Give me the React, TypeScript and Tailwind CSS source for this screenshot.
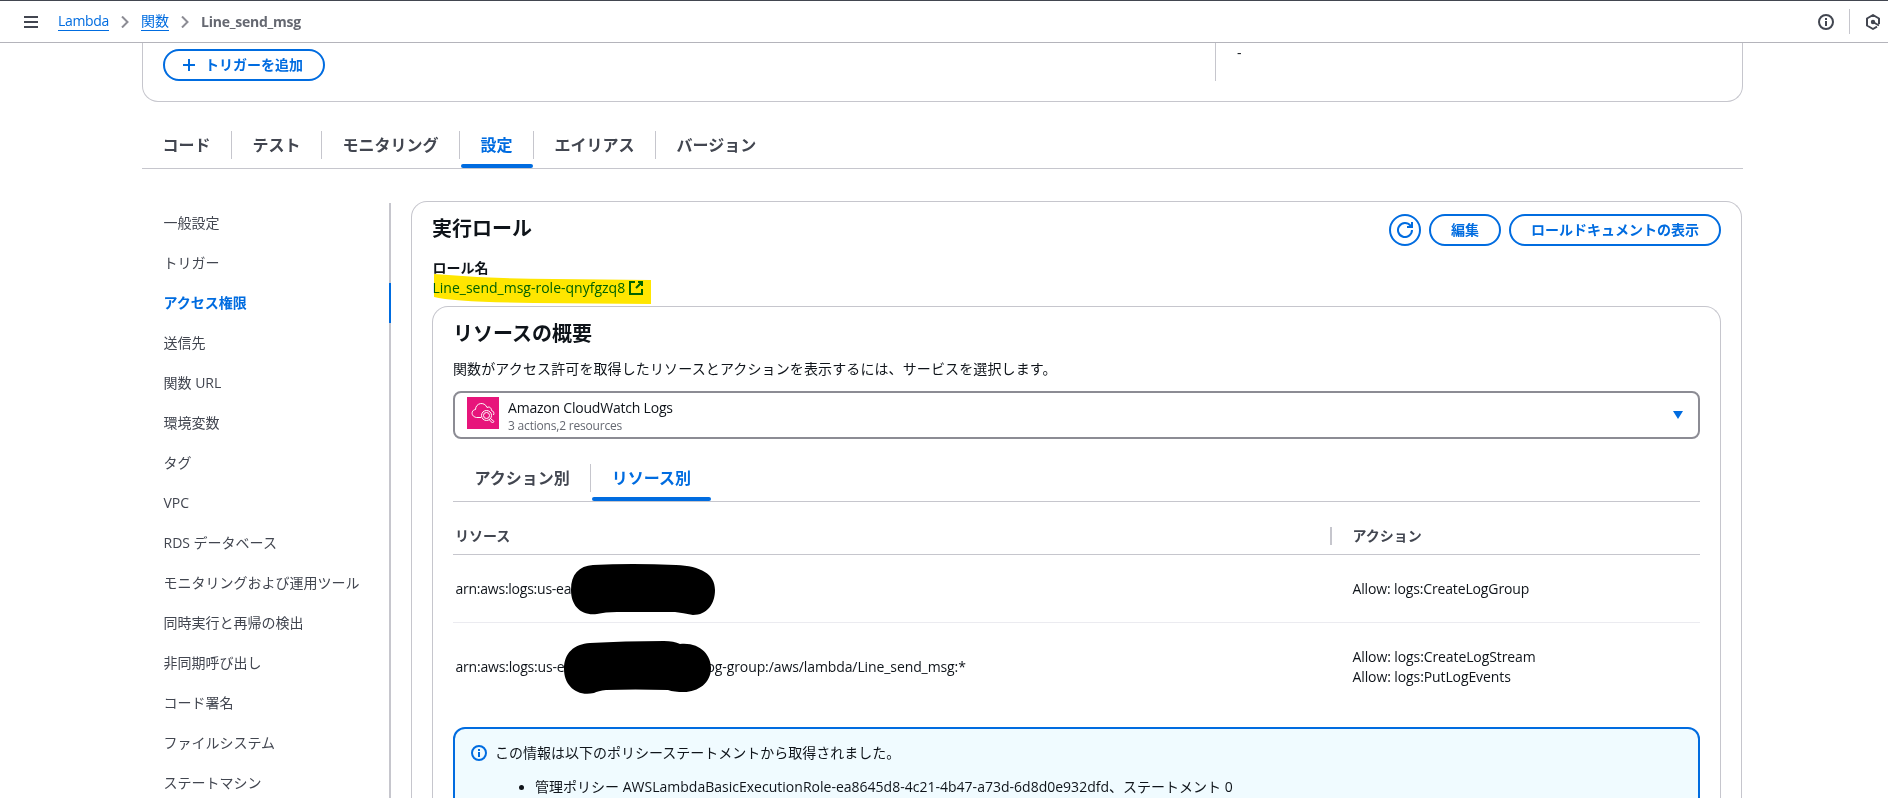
import { ReactNode } from "react";
import clsx from "clsx";

const functionTabs = [
  "コード",
  "テスト",
  "モニタリング",
  "設定",
  "エイリアス",
  "バージョン",
];

const settingsNav = [
  "一般設定",
  "トリガー",
  "アクセス権限",
  "送信先",
  "関数 URL",
  "環境変数",
  "タグ",
  "VPC",
  "RDS データベース",
  "モニタリングおよび運用ツール",
  "同時実行と再帰の検出",
  "非同期呼び出し",
  "コード署名",
  "ファイルシステム",
  "ステートマシン",
];

export default function App() {
  return (
    <div className="flex h-screen flex-col overflow-hidden bg-white font-['Open_Sans','Noto_Sans_CJK_JP',sans-serif] text-sm leading-5 text-[#0f141a]">
      <TopBar />
      <main className="flex w-[1743px] flex-1 flex-col overflow-hidden pl-[142px]">
        <FunctionOverview />
        <Tabs tabs={functionTabs} active="設定" className="mt-[22px] h-[45px]" />
        <div className="flex pt-8">
          <SettingsNav />
          <ExecutionRole />
        </div>
      </main>
    </div>
  );
}

function TopBar() {
  return (
    <header className="flex h-[43px] shrink-0 items-center border-b border-t border-b-[#b4b4bb] border-t-[#424650] pl-6 pr-[7px]">
      <svg width="14" height="12" className="text-[#424650]">
        <path d="M0 1h14M0 6h14M0 11h14" stroke="currentColor" strokeWidth="2" />
      </svg>
      <nav className="ml-5 flex items-center">
        <a className="w-[51px] border-b border-[#006ce0] leading-[18px] tracking-[-0.33px] text-[#006ce0]">
          Lambda
        </a>
        <Chevron />
        <a className="border-b border-[#006ce0] leading-[18px] text-[#006ce0]">
          関数
        </a>
        <Chevron />
        <span className="font-bold tracking-[-0.24px] text-[#656871]">
          Line_send_msg
        </span>
      </nav>
      <div className="ml-auto flex items-center">
        <InfoIcon className="text-[#424650]" />
        <div className="ml-[15px] h-[25px] w-px bg-[#c6c6cd]" />
        <svg
          width="16"
          height="16"
          viewBox="0 0 16 16"
          fill="none"
          stroke="currentColor"
          strokeWidth="2"
          className="ml-[15px] text-[#424650]"
        >
          <path d="M14 10V4.500L8 1 2 4.500v7L8 15l4-2.300" strokeLinejoin="round" />
          <path d="M8 8l6 3.500" />
          <circle cx="8" cy="8" r="1.200" fill="currentColor" />
        </svg>
      </div>
    </header>
  );
}

function Chevron() {
  return (
    <svg
      width="8"
      height="12"
      fill="none"
      stroke="currentColor"
      strokeWidth="2"
      className="mx-3 text-[#8c8c94]"
    >
      <path d="M1 0.500l5.500 5.500L1 11.500" />
    </svg>
  );
}

function InfoIcon({ className }: { className?: string }) {
  return (
    <svg
      width="16"
      height="16"
      viewBox="0 0 16 16"
      fill="none"
      stroke="currentColor"
      strokeWidth="2"
      className={clsx("shrink-0", className)}
    >
      <circle cx="8" cy="8" r="7" />
      <path d="M8 7v5M8 4v2" />
    </svg>
  );
}

function Button({ children }: { children: ReactNode }) {
  return (
    <button className="flex h-8 items-center rounded-full border-2 border-[#006ce0] px-5 font-bold text-[#006ce0]">
      {children}
    </button>
  );
}

function FunctionOverview() {
  return (
    <section className="flex h-[59px] shrink-0 justify-between rounded-b-2xl border-x border-b border-[#c6c6cd] pl-5 pt-1.5">
      <Button>
        <svg
          width="16"
          height="16"
          stroke="currentColor"
          strokeWidth="2"
          className="-ml-1 mr-2"
        >
          <path d="M8 2v12M2 8h12" />
        </svg>
        トリガーを追加
      </Button>
      <div className="-mt-1.5 h-[38px] w-[527px] border-l border-[#c6c6cd] pl-[21px]">
        -
      </div>
    </section>
  );
}

function Tabs({
  tabs,
  active,
  className,
}: {
  tabs: string[];
  active: string;
  className?: string;
}) {
  return (
    <div
      className={clsx(
        "flex shrink-0 border-b border-[#c6c6cd] text-base font-bold text-[#424650]",
        className
      )}
    >
      {tabs.map((tab, i) => (
        <div key={tab} className="relative h-full pt-[7px]">
          <div
            className={clsx(
              "flex h-7 items-center border-r pl-[20.5px] pr-[20.5px]",
              i < tabs.length - 1 ? "border-[#c6c6cd]" : "border-transparent",
              tab === active && "text-[#006ce0]"
            )}
          >
            {tab}
          </div>
          {tab === active && (
            <div className="absolute bottom-0 left-px right-px h-1 rounded-sm bg-[#006ce0]" />
          )}
        </div>
      ))}
    </div>
  );
}

function SettingsNav() {
  return (
    <ul className="mt-0.5 w-[249px] shrink-0">
      {settingsNav.map((item) => (
        <li
          key={item}
          className={clsx(
            "flex h-10 items-center border-r-2 pl-[21.5px]",
            item === "アクセス権限"
              ? "border-[#006ce0] font-bold text-[#006ce0]"
              : "border-[#c6c6cd] text-[#424650]"
          )}
        >
          {item}
        </li>
      ))}
    </ul>
  );
}

function ExecutionRole() {
  return (
    <section className="ml-5 h-[700px] w-[1331px] rounded-t-2xl border-x border-t border-[#c6c6cd] px-5 pt-3">
      <div className="flex items-start justify-between">
        <h2 className="pt-[3px] text-xl font-bold leading-6">実行ロール</h2>
        <div className="flex gap-2">
          <button className="flex size-8 items-center justify-center rounded-full border-2 border-[#006ce0] text-[#006ce0]">
            <svg
              width="16"
              height="16"
              fill="none"
              stroke="currentColor"
              strokeWidth="2"
            >
              <path d="M15 8a7 7 0 1 1-1.500-4.300L15 5" />
              <path d="M15 0v5h-5" />
            </svg>
          </button>
          <Button>編集</Button>
          <Button>ロールドキュメントの表示</Button>
        </div>
      </div>
      <div className="relative mt-3 h-[48px] pl-[0.5px]">
        <div className="font-bold">ロール名</div>
        <a className="flex items-center text-[#006ce0]">
          Line_send_msg-role-qnyfgzq8
          <svg
            width="16"
            height="16"
            fill="none"
            stroke="currentColor"
            strokeWidth="2"
            className="ml-[3px]"
          >
            <path d="M7 2H2v12h12V9M10 2h4v4M14 2L8 8" />
          </svg>
        </a>
        {/* marker stroke over the role link */}
        <svg
          width="218"
          height="30"
          className="absolute left-0.5 top-4 mix-blend-multiply"
        >
          <path d="M0 0Q60 5 120 5L217 6V30L100 29Q20 28 0 23Z" fill="#ffe600" />
        </svg>
      </div>
      <ResourceSummary />
    </section>
  );
}

function ResourceSummary() {
  return (
    <div className="h-[600px] w-[1289px] rounded-t-2xl border-x border-t border-[#c6c6cd] px-5 pt-[15px]">
      <h3 className="text-xl font-bold leading-6">リソースの概要</h3>
      <p className="mt-[13px] tracking-[0.12px]">
        関数がアクセス許可を取得したリソースとアクションを表示するには、サービスを選択します。
      </p>
      <div className="mt-3 flex h-12 items-start rounded-lg border-2 border-[#8c8c94] pl-3 pr-[15px] pt-1">
        <CloudWatchIcon />
        <div className="ml-[9px]">
          <div className="leading-[21px] tracking-[-0.21px]">
            Amazon CloudWatch Logs
          </div>
          <div className="text-xs leading-4 tracking-[-0.19px] text-[#656871]">
            3 actions,2 resources
          </div>
        </div>
        <svg width="10" height="8" className="ml-auto mt-3.5" fill="#006ce0">
          <path d="M0 0h10L5 8z" />
        </svg>
      </div>
      <Tabs
        tabs={["アクション別", "リソース別"]}
        active="リソース別"
        className="mt-[18px] h-[45px] pl-px"
      />
      <ResourceTable />
      <div className="mt-[17px] h-[120px] rounded-xl border-2 border-[#006ce0] bg-[#f0fbff] px-4 pt-[14px]">
        <div className="flex items-center">
          <InfoIcon className="text-[#006ce0]" />
          <span className="ml-2">
            この情報は以下のポリシーステートメントから取得されました。
          </span>
        </div>
        <ul className="mt-[14px] pl-16">
          <li className="relative flex items-center tracking-[0.01px]">
            <span className="absolute -left-4 size-[5px] rounded-full bg-[#0f141a]" />
            管理ポリシー
            AWSLambdaBasicExecutionRole-ea8645d8-4c21-4b47-a73d-6d8d0e932dfd、ステートメント
            0
          </li>
        </ul>
      </div>
    </div>
  );
}

function ResourceTable() {
  return (
    <div>
      <div className="flex h-[53px] items-center border-b border-[#c6c6cd] pt-4 font-bold text-[#424650]">
        <div className="w-[877px] pl-0.5">リソース</div>
        <div className="h-[18px] w-0.5 bg-[#c6c6cd]" />
        <div className="pl-[20.5px]">アクション</div>
      </div>
      <div className="flex h-[68px] items-center border-b border-[#ebebf0] pt-px">
        <div className="relative w-[899.5px] pl-[2.5px] tracking-[-0.24px]">
          arn:aws:logs:us-ea
          <svg
            width="145"
            height="52"
            className="absolute -top-[15px] left-[118px]"
          >
            <path d="M0 26C0 10 8 2 22 1Q60-1 105 1C130 2 144 10 144 26C144 40 136 51 122 51Q112 49 104 48H46Q34 48 26 50C10 52 0 42 0 26Z" />
          </svg>
        </div>
        <div className="tracking-[-0.14px]">Allow: logs:CreateLogGroup</div>
      </div>
      <div className="flex h-[87px] items-center">
        <div className="relative flex w-[899.5px] pl-[2.5px]">
          <span className="w-[251px] tracking-[-0.2px]">arn:aws:logs:us-e</span>
          <span className="tracking-[-0.1px]">
            og-group:/aws/lambda/Line_send_msg:*
          </span>
          <svg
            width="148"
            height="54"
            className="absolute -top-4 left-[111px]"
          >
            <path d="M0 28C0 12 10 3 26 2Q60 0 100 0Q110 0 116 3C136 1 147 14 147 27C147 42 134 51 120 51Q110 51 104 49Q70 48 42 49Q34 50 30 52C12 56 0 44 0 28Z" />
          </svg>
        </div>
        <div className="tracking-[-0.1px]">
          <div>Allow: logs:CreateLogStream</div>
          <div>Allow: logs:PutLogEvents</div>
        </div>
      </div>
    </div>
  );
}

function CloudWatchIcon() {
  return (
    <svg
      width="32"
      height="32"
      fill="none"
      stroke="white"
      strokeWidth="1"
      className="shrink-0 bg-[#e7157b]"
    >
      <path d="M14 20.500H9.500C3.500 19.500 4 13 8.500 12.500C8.500 6 17.500 4 20 10.500C23 9 24.500 11.500 24.500 13.500C26.500 14 27.500 16 26.500 18" />
      <circle cx="19.500" cy="18.500" r="5" />
      <circle cx="19.500" cy="18.500" r="3" />
      <path d="M22 22.500l3.500 3.500 1.500-1.500-3.500-3" />
    </svg>
  );
}
